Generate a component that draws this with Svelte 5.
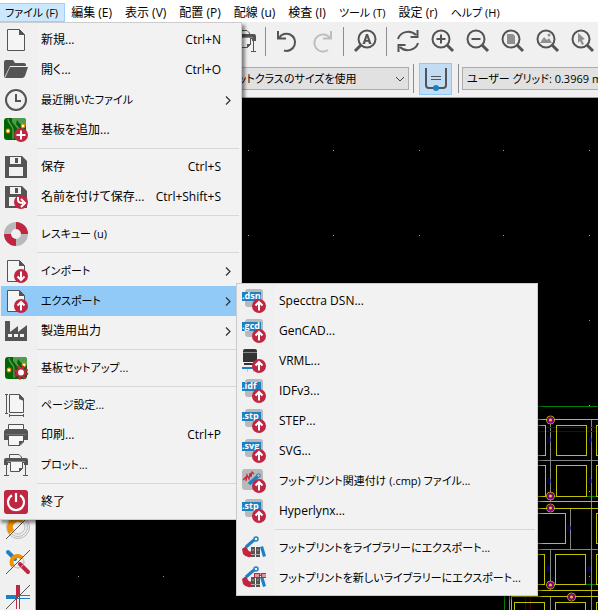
<script>
  const doc =
    '<path d="M3.5 1.5H15.5L20.5 6.5V22.5H3.5Z" fill="#f5f5f5" stroke="#545454"/><path d="M15 1L21 7H15Z" fill="#545454"/>';
  const floppy =
    '<path d="M1 1H18L23 6V23H1Z" fill="#545454"/><path d="M6 2H17V9H6Z" fill="#f2f2f2"/><path d="M11 3H14V8H11Z" fill="#545454"/><path d="M5 12H19V21H5Z" fill="#f2f2f2"/>';
  const badge = '<circle cx="17" cy="17" r="7" fill="#bf2641"/>';
  const arrowUp = badge + '<path d="M17 21.5V13.5M13.5 16.5L17 13L20.5 16.5" fill="none" stroke="#fff" stroke-width="2"/>';
  const arrowDown = badge + '<path d="M17 12.5V20.5M13.5 17.5L17 21L20.5 17.5" fill="none" stroke="#fff" stroke-width="2"/>';
  const board =
    '<rect x="0" y="0" width="22" height="22" rx="3" fill="#006400"/><path d="M8 0H19Q22 0 22 3V8L16 6L13 2L12 6L16 11V14L12 9L8 4Z" fill="#4f9b4f"/><path d="M4 1C4 6 9 7 9 12V21" fill="none" stroke="#4f9b4f" stroke-width="1.5"/><circle cx="4" cy="13" r="1.8" fill="#fff" stroke="#f29100" stroke-width="1.2"/><circle cx="19" cy="8" r="1.8" fill="#fff" stroke="#f29100" stroke-width="1.2"/>';
  const format = (name) =>
    '<rect x="3" y="0" width="18" height="18" rx="3" fill="#b9b9b9"/><rect x="0" y="3" width="19" height="9" fill="#1a81c4"/>' +
    `<text x="0" y="10" font-size="9" font-weight="700" fill="#fff">${name}</text>` +
    arrowUp;
  const plotter =
    '<path d="M5.5 6V1.5H15L17.5 4V6" fill="none" stroke="#545454"/><path d="M0 12V7Q0 5 2 5H22Q24 5 24 7V12H20V10H4V12Z" fill="#545454"/><path d="M6.5 9V18.5H15.5L18.5 15.5V9" fill="#f5f5f5" stroke="#545454"/><path d="M3 8.5H21" stroke="#8a8a8a"/><path d="M15 19V15H19Z" fill="#545454"/><path d="M2.5 11V22M21.5 11V22M0 22.5H5M19 22.5H24" stroke="#545454"/>';
  const lens = '<circle cx="10" cy="10" r="8.5" fill="none" stroke="#545454" stroke-width="2"/><path d="M16 16L22 22" stroke="#545454" stroke-width="3"/>';
  const library =
    '<path d="M0 13L4 10L6 14Q8 17 12 14V20Q5 23 1 18Z" fill="#bf2641"/><path d="M4 11L12 4" stroke="#1a81c4" stroke-width="3"/><circle cx="14" cy="3" r="2" fill="#f2f2f2" stroke="#1a81c4" stroke-width="1.5"/><path d="M9 11H13V21H9ZM14 11H18V21H14Z" fill="#545454"/><path d="M9 18.5H18M11 13V15M16 13V15" stroke="#aaa"/><path d="M18 11L21 10L24 20L21 21Z" fill="#1a81c4"/>';

  const icons = {
    new: doc,
    open: '<path d="M0 20V4Q0 2 2 2H9L11 5H20Q22 5 22 7V8H6Z" fill="#545454"/><path d="M1 20L6 9H24L21 18Q20 20 18 20Z" fill="#545454"/>',
    recent: '<circle cx="12" cy="12" r="10" fill="none" stroke="#545454" stroke-width="2"/><path d="M12 6V13H17" fill="none" stroke="#545454" stroke-width="2"/>',
    append: board + badge + '<path d="M17 12.5V21.5M12.5 17H21.5" stroke="#fff" stroke-width="2"/>',
    save: floppy,
    saveAs: floppy + badge + '<path d="M14 12V15Q14 18 19 18M17 14L21 18L17 22" fill="none" stroke="#fff" stroke-width="2"/>',
    rescue:
      '<circle cx="12" cy="12" r="8.5" fill="none" stroke="#b9b9b9" stroke-width="7"/><path d="M12 3.5A8.5 8.5 0 0 1 20.5 12M12 20.5A8.5 8.5 0 0 1 3.5 12" fill="none" stroke="#bf2641" stroke-width="7"/>',
    import: doc + arrowDown,
    export: doc + arrowUp,
    fab: '<path d="M1 2H6V13L14 7V13L23 6V22H1Z" fill="#545454"/><path d="M4 15H8V18H4ZM10 15H14V18H10ZM16 15H20V18H16Z" fill="#f2f2f2"/>',
    setup:
      '<g transform="translate(1 1)">' + board + '</g><circle cx="17" cy="16.5" r="6" fill="none" stroke="#bf2641" stroke-width="2.6" stroke-dasharray="2.4 2.31"/><circle cx="17" cy="16.5" r="4" fill="#fff" stroke="#bf2641" stroke-width="2.2"/>',
    page: '<path d="M5.5 1.5H15.5L19.5 5.5V19.5H5.5Z" fill="#f5f5f5" stroke="#545454"/><path d="M15 1L20 6V8L15 6Z" fill="#545454"/><path d="M2.5 1V20M1 1.5H4M1 20.5H4M5 22.5H20M5.5 21V24M19.5 21V24" stroke="#545454"/>',
    print:
      '<path d="M4.5 7V1.5H19.5V7" fill="#f5f5f5" stroke="#545454"/><path d="M2 6H22L24 8V17H20V13H4V17H0V8Z" fill="#545454"/><path d="M2 11.5H22" stroke="#777"/><path d="M4.5 13V22.5H16L19.5 19V13" fill="#f5f5f5" stroke="#545454"/><path d="M15 23V18H20Z" fill="#545454"/>',
    plot: plotter,
    quit: '<rect width="24" height="24" rx="3" fill="#bf2641"/><path d="M8 5.2A8 8 0 1 0 16 5.2M12 3V12" fill="none" stroke="#fff" stroke-width="2.2"/>',
    dsn: format('.dsn'),
    gcd: format('.gcd'),
    idf: format('.idf'),
    stp: format('.stp'),
    svg: format('.svg'),
    vrml: '<path d="M1 2Q1 0 3 0H13Q15 0 15 2V12H1Z" fill="#333"/><path d="M1 3.5H15" stroke="#888"/><path d="M1 12H15V13H1ZM2 14H15V16H2Z" fill="#333"/><path d="M0 18H14V20H0Z" fill="#1a81c4"/><path d="M5.5 20V23M11.5 20V23" stroke="#c5c5c5"/>' + arrowUp,
    cmp: '<rect width="21" height="21" rx="3" fill="#b9b9b9"/><path d="M1 11L4 8L4 12L5 6L7 10L8 4L9 8L10 3L12 5" fill="none" stroke="#bf2641" stroke-width="1.2"/><path d="M7 15L16 7" stroke="#1a81c4" stroke-width="3.5"/><circle cx="16.5" cy="6.5" r="1.8" fill="#b9b9b9" stroke="#1a81c4"/>' + arrowUp,
    library,
    newLibrary: library + '<rect x="12" y="7" width="12" height="5" fill="#bf2641"/><path d="M14 8V11M16 8V11M18 8H19M18 10.5H19M21 8V11M23 8V11" stroke="#fff"/>',
    undo: '<path d="M4 9A8.6 8.6 0 1 1 9 21.5M3 2V9.5H11" fill="none" stroke="#545454" stroke-width="2"/>',
    redo: '<path d="M20 9A8.6 8.6 0 1 0 18 21M21 2V9.5H13" fill="none" stroke="#bdbdbd" stroke-width="2"/>',
    find: '<circle cx="14" cy="10" r="8.5" fill="none" stroke="#545454" stroke-width="2"/><path d="M8 16L2 22" stroke="#545454" stroke-width="3"/><path d="M9.5 15L13 5H15L18.5 15H16L15.3 12.7H12.7L12 15ZM13.2 11H14.8L14 8Z" fill="#545454"/>',
    refresh: '<path d="M2 10A10.5 9.5 0 0 1 20 6M22 14A10.5 9.5 0 0 1 4 18M21.5 1V8H14.5M2.5 23V16H9.5" fill="none" stroke="#545454" stroke-width="2"/>',
    zoomIn: lens + '<path d="M10 5.5V14.5M5.5 10H14.5" stroke="#545454" stroke-width="2"/>',
    zoomOut: lens + '<path d="M5.5 10H14.5" stroke="#545454" stroke-width="2"/>',
    zoomPage: lens + '<path d="M6 5H12L14 7V15H6Z" fill="#909090"/>',
    zoomObjects: lens + '<path d="M4 14L8 8L11 11L13 9L16 14Z" fill="#909090"/><circle cx="13" cy="6" r="1.5" fill="#909090"/>',
    zoomSelection: lens + '<path d="M7 4L14 10L11 11L13 15L11 16L9 12L7 14Z" fill="#909090"/>',
    pads: '<g fill="none" stroke="#b9b9b9"><circle cx="12" cy="12" r="11.5"/><circle cx="12" cy="12" r="9.5"/><circle cx="12" cy="12" r="7"/></g><path d="M3 19A11.5 11.5 0 0 1 19 3L15 8A5 5 0 0 0 8 15Z" fill="#f29100"/><path d="M0 24L24 0" stroke="#545454"/>',
    vias: '<path d="M2 2L9 9" stroke="#1a81c4" stroke-width="4" stroke-linecap="round"/><path d="M14 14L22 22" stroke="#bf2641" stroke-width="4" stroke-linecap="round"/><circle cx="12" cy="12" r="6" fill="none" stroke="#b9b9b9"/><path d="M7 16A5 5 0 1 1 16 8" fill="none" stroke="#f29100" stroke-width="4"/><path d="M0 24L24 0" stroke="#545454"/>',
    tracks: '<path d="M0 12H12" stroke="#1a81c4" stroke-width="4"/><path d="M12 0V12" stroke="#bf2641" stroke-width="4"/><path d="M12 10.5H24M12 13.5H24" stroke="#1a81c4"/><path d="M10.5 12V24M13.5 12V24" stroke="#bf2641"/><path d="M0 24L24 0" stroke="#545454"/>'
  };

  const menubar = ['ファイル (F)', '編集 (E)', '表示 (V)', '配置 (P)', '配線 (u)', '検査 (I)', 'ツール (T)', '設定 (r)', 'ヘルプ (H)'];

  const fileMenu = [
    { icon: 'new', label: '新規...', keys: 'Ctrl+N' },
    { icon: 'open', label: '開く...', keys: 'Ctrl+O' },
    { icon: 'recent', label: '最近開いたファイル', sub: true },
    { icon: 'append', label: '基板を追加...' },
    null,
    { icon: 'save', label: '保存', keys: 'Ctrl+S' },
    { icon: 'saveAs', label: '名前を付けて保存...', keys: 'Ctrl+Shift+S' },
    null,
    { icon: 'rescue', label: 'レスキュー (u)' },
    null,
    { icon: 'import', label: 'インポート', sub: true },
    { icon: 'export', label: 'エクスポート', sub: true, active: true },
    { icon: 'fab', label: '製造用出力', sub: true },
    null,
    { icon: 'setup', label: '基板セットアップ...' },
    null,
    { icon: 'page', label: 'ページ設定...' },
    { icon: 'print', label: '印刷...', keys: 'Ctrl+P' },
    { icon: 'plot', label: 'プロット...' },
    null,
    { icon: 'quit', label: '終了' }
  ];

  const exportMenu = [
    { icon: 'dsn', label: 'Specctra DSN...' },
    { icon: 'gcd', label: 'GenCAD...' },
    { icon: 'vrml', label: 'VRML...' },
    { icon: 'idf', label: 'IDFv3...' },
    { icon: 'stp', label: 'STEP...' },
    { icon: 'svg', label: 'SVG...' },
    { icon: 'cmp', label: 'フットプリント関連付け (.cmp) ファイル...' },
    { icon: 'stp', label: 'Hyperlynx...' },
    null,
    { icon: 'library', label: 'フットプリントをライブラリーにエクスポート...' },
    { icon: 'newLibrary', label: 'フットプリントを新しいライブラリーにエクスポート...' }
  ];

  const topTools = [
    'save', 'open', 'new', null, 'setup', null, 'page', 'print', 'plot', null, 'undo', 'redo', null, 'find', null,
    'refresh', 'zoomIn', 'zoomOut', 'zoomPage', 'zoomObjects', 'zoomSelection'
  ];
  const sideTools = ['page', 'new', 'recent', null, 'find', 'zoomIn', 'zoomOut', null, 'zoomPage', 'refresh', 'fab', null, 'rescue', 'plot', 'pads', 'vias', 'tracks'];

  // Labels with a long kana run are set one size smaller than kanji and Latin ones.
  const isKana = (text) => /[\u3040-\u30ff]{3,}/.test(text);

  // Board geometry, in canvas pixels.
  const gridX = [42, 127, 212, 297, 383, 467, 553];
  const gridY = [52, 137, 222, 307, 393, 478];
  const pads = [
    [480, 327, 29, 30], [520, 327, 30, 30], [560, 327, 31, 30],
    [480, 367, 29, 31], [520, 367, 30, 31], [560, 367, 31, 31],
    [480, 415, 49, 30], [560, 415, 31, 30],
    [480, 456, 28, 30], [519, 456, 30, 30], [560, 456, 31, 30],
    [478, 504, 30, 30], [519, 504, 30, 30], [560, 504, 31, 30]
  ];
  const rows = [321, 403, 410, 492, 498];
  const vias = [[514, 322], [514, 398], [514, 410], [514, 487], [535, 499]];
  const marks = [[511, 340], [552, 340], [511, 381], [552, 381], [531, 428], [510, 469], [551, 469]];
</script>

{#snippet icon(name)}
  <svg class="icon" viewBox="0 0 24 24" aria-hidden="true">{@html icons[name]}</svg>
{/snippet}

{#snippet popup(entries)}
  {#each entries as entry}
    {#if entry}
      <li role="none">
        <button class="entry" class:active={entry.active} role="menuitem">
          {@render icon(entry.icon)}
          <span class="label" class:kana={isKana(entry.label)}>{entry.label}</span>
          {#if entry.keys}<span class="keys">{entry.keys}</span>{/if}
          {#if entry.sub}
            <svg class="more" viewBox="0 0 6 9" aria-hidden="true"><path d="M1 0.5L5 4.5L1 8.5" /></svg>
          {/if}
        </button>
      </li>
    {:else}
      <li class="rule" role="separator"></li>
    {/if}
  {/each}
{/snippet}

{#snippet tools(names)}
  {#each names as name}
    {#if name}
      <button class="tool" aria-label={name}>{@render icon(name)}</button>
    {:else}
      <span class="split"></span>
    {/if}
  {/each}
{/snippet}

{#snippet dropdown(id, name, value)}
  <div class="dropdown {id}">
    <select {id} class="kana" aria-label={name}><option>{value}</option></select>
    <svg viewBox="0 0 10 6" aria-hidden="true"><path d="M1 1L5 5L9 1" /></svg>
  </div>
{/snippet}

<div class="app">
  <nav class="menubar">
    {#each menubar as title, i}
      <button class:open={i === 0} class:kana={isKana(title)}>{title}</button>
    {/each}
  </nav>

  <div class="toolbar main">{@render tools(topTools)}</div>

  <div class="toolbar options">
    {@render dropdown('via', 'ビア', 'ビア: ネットクラスのサイズを使用')}
    <span class="split"></span>
    <button class="toggle" aria-label="配線幅" aria-pressed="true">
      <svg class="icon" viewBox="0 0 24 24" aria-hidden="true">
        <path d="M2 1V18Q2 21 5 21H19Q22 21 22 18V1" fill="none" stroke="#545454" stroke-width="2" />
        <path d="M7 9.5H17M7 12.5H17" stroke="#545454" />
        <circle cx="12" cy="21" r="3" fill="#1a81c4" />
      </svg>
    </button>
    <span class="split"></span>
    {@render dropdown('grid', 'グリッド', 'ユーザー グリッド: 0.3969 mm (15.62 mils)')}
  </div>

  <div class="work">
    <div class="side">{@render tools(sideTools)}</div>
    <main>
      <svg class="board" width="562" height="512" aria-hidden="true">
        <path d="M502 308.5H562M468.5 498V512M514 398.5H562M514 486.5H562" stroke="#008000" />
        <path d="M514.5 321V403M514.5 451V492M514.5 499V512M555.5 321V512M502 362.5H562M534.5 410V451M502 451.5H562M473.5 498V512" stroke="#848484" />
        <path d="M502 329.5H562M502 333.5H562M489.5 499V512M494.5 499V512" stroke="#480000" />
        {#each pads as [x, y, w, h]}
          <rect x={x + 0.5} y={y + 0.5} width={w} height={h} class="pad" />
        {/each}
        {#each rows as y}
          <path d="M475 {y + 0.5}H562" stroke="#c2c200" />
        {/each}
        <path d="M475.5 499V512" stroke="#c2c200" />
        {#each vias as [x, y]}
          <circle cx={x + 0.5} cy={y} r="4" fill="none" stroke="#c2c200" />
          <circle cx={x + 0.5} cy={y} r="2.5" fill="#e0c030" stroke="#840084" stroke-width="2" />
        {/each}
        {#each marks as [x, y]}
          <path d="M{x} {y}h3v4h-3m0 -2h3" fill="none" stroke="#000084" />
        {/each}
        {#each gridX as x}
          {#each gridY as y}
            <rect {x} {y} width="1" height="1" fill="#a0a0a0" />
          {/each}
        {/each}
      </svg>
    </main>
  </div>

  <ul class="menu file" role="menu">{@render popup(fileMenu)}</ul>
  <ul class="menu export" role="menu">{@render popup(exportMenu)}</ul>
</div>

<style>
  :global(body) {
    margin: 0;
  }
  .app {
    position: relative;
    display: flex;
    flex-direction: column;
    height: 100vh;
    overflow: hidden;
    background: #f0f0f0;
    color: #000;
    font: 12px/18px 'Open Sans', 'Noto Sans CJK JP', sans-serif;
    font-feature-settings: 'palt';
    white-space: nowrap;
  }
  button,
  select {
    font: inherit;
    font-feature-settings: inherit;
    color: inherit;
    border: 0;
    padding: 0;
    margin: 0;
    background: none;
    white-space: nowrap;
  }
  .kana {
    font-size: 11px;
  }
  .icon {
    flex: none;
    width: 24px;
    height: 24px;
    overflow: visible;
  }
  .menubar {
    display: flex;
    flex: none;
    align-items: flex-end;
    height: 22px;
    background: #fff;
  }
  .menubar button {
    box-sizing: border-box;
    height: 19px;
    padding: 0 6px;
    line-height: 17px;
    border: 1px solid transparent;
    border-left: 0;
  }
  .menubar .open {
    padding: 0 6px 0 5px;
    background: #cce8ff;
    border-color: #99d1ff;
  }
  .toolbar {
    display: flex;
    flex: none;
    align-items: center;
    overflow: hidden;
  }
  .main {
    height: 38px;
  }
  .options {
    height: 37px;
    border-bottom: 1px solid #a0a0a0;
  }
  .tool {
    display: flex;
    flex: none;
    align-items: center;
    justify-content: center;
    width: 35px;
    height: 35px;
  }
  .split {
    flex: none;
    width: 8px;
    height: 29px;
    background: linear-gradient(#8c8c8c, #8c8c8c) center / 1px 100% no-repeat;
  }
  .dropdown {
    display: grid;
    flex: none;
    align-items: center;
  }
  .dropdown select {
    grid-area: 1 / 1;
    box-sizing: border-box;
    width: 100%;
    height: 23px;
    padding: 0 4px;
    appearance: none;
    background: #e1e1e1;
    border: 1px solid #adadad;
    border-radius: 0;
  }
  .dropdown svg {
    grid-area: 1 / 1;
    justify-self: end;
    width: 10px;
    height: 6px;
    margin-right: 4px;
    fill: none;
    stroke: #404040;
    pointer-events: none;
  }
  .via {
    width: 213px;
    margin-left: 196px;
  }
  .grid {
    width: 260px;
  }
  .toggle {
    display: flex;
    flex: none;
    align-items: center;
    justify-content: center;
    box-sizing: border-box;
    width: 33px;
    height: 32px;
    margin: 0 2px;
    background: #c2dcf3;
    border: 1px solid #90c8f6;
  }
  .work {
    display: flex;
    flex: 1;
    min-height: 0;
  }
  .side {
    flex: none;
    width: 35px;
    padding-top: 2px;
    border-right: 1px solid #a0a0a0;
    overflow: hidden;
  }
  .side .split {
    display: block;
    width: 29px;
    height: 8px;
    margin: 0 auto;
    background: linear-gradient(#8c8c8c, #8c8c8c) center / 100% 1px no-repeat;
  }
  main {
    flex: 1;
    min-width: 0;
    overflow: hidden;
    background: #000;
  }
  .board {
    display: block;
  }
  .pad {
    fill: none;
    stroke: #c2c200;
  }
  .menu {
    position: absolute;
    box-sizing: border-box;
    margin: 0;
    padding: 2px;
    list-style: none;
    background: linear-gradient(90deg, #f0f0f0 38px, #f2f2f2 38px);
    border: 1px solid #ccc;
    box-shadow: 3px 3px 3px rgba(0, 0, 0, 0.45);
  }
  .file {
    top: 22px;
    left: -2px;
    width: 244px;
  }
  .export {
    top: 283px;
    left: 236px;
    width: 302px;
  }
  .entry {
    display: flex;
    align-items: center;
    width: 100%;
    height: 30px;
    padding: 0 8px 0 3px;
    text-align: left;
  }
  .entry.active {
    background: #91c9f7;
  }
  .label {
    flex: 1;
    margin-left: 13px;
  }
  .keys {
    margin-right: 10px;
  }
  .more {
    width: 6px;
    height: 9px;
    fill: none;
    stroke: #303030;
    stroke-width: 1.2;
  }
  .rule {
    height: 1px;
    margin: 3px 0 3px 36px;
    background: #d7d7d7;
  }
</style>
